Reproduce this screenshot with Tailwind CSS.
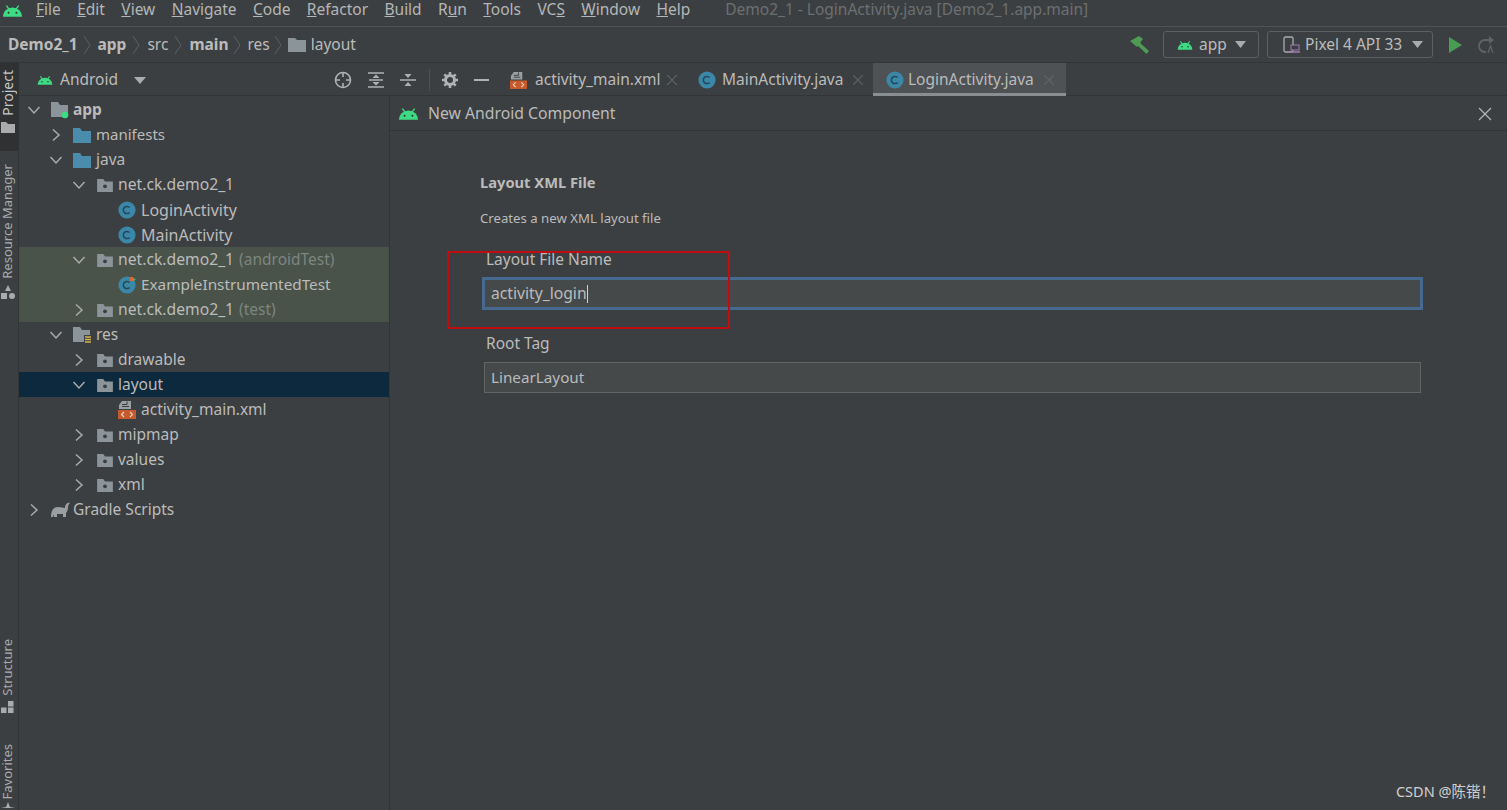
<!DOCTYPE html>
<html lang="en">
<head>
    <meta charset="UTF-8">
    <meta name="viewport" content="width=device-width, initial-scale=1.0">
    <title>Android Studio - New Android Component</title>
    <script src="https://cdn.jsdelivr.net/npm/@tailwindcss/browser@4"></script>
</head>
<body class="bg-[#3c3f41] text-[#bbbbbb] h-[810px] w-[1507px] overflow-hidden relative flex flex-col [font-family:'Noto_Sans','Noto_Sans_CJK_SC',sans-serif] text-[15.5px]">
    <svg class="hidden">
        <symbol id="android" viewBox="0 0 24 14">
            <path d="M1 14a11 10.5 0 0 1 22 0z" fill="#3ddc84"/>
            <path d="M5 1.5l3 4M19 1.5l-3 4" stroke="#3ddc84" stroke-width="1.6" fill="none"/>
            <circle cx="7.5" cy="9.5" r="1.1" fill="#2b2d2e"/><circle cx="16.5" cy="9.5" r="1.1" fill="#2b2d2e"/>
        </symbol>
        <symbol id="chev-r" viewBox="0 0 16 16"><path d="M5 2.5l6 5.5-6 5.5" fill="none" stroke="#a9abad" stroke-width="1.5"/></symbol>
        <symbol id="chev-d" viewBox="0 0 16 16"><path d="M2.5 5l5.5 6 5.5-6" fill="none" stroke="#a9abad" stroke-width="1.5"/></symbol>
        <symbol id="sep" viewBox="0 0 9 20"><path d="M1 1l6 9-6 9" fill="none" stroke="#5d6062"/></symbol>
        <symbol id="close" viewBox="0 0 10 10"><path d="M0 0l10 10M10 0L0 10" stroke="#616365" stroke-width="1.2"/></symbol>
        <symbol id="folder-blue" viewBox="0 0 18 16"><path d="M0 1h7l2 3h9v12H0z" fill="#4a8cac"/></symbol>
        <symbol id="folder-pkg" viewBox="0 0 18 16"><path d="M0 1h7l2 3h9v12H0z" fill="#8a9499"/><circle cx="9" cy="9.5" r="2.2" fill="#3c3f41"/></symbol>
        <symbol id="cls" viewBox="0 0 18 18"><circle cx="9" cy="9" r="8.6" fill="#3b87a8"/><path d="M11.6 6.6a3.6 3.6 0 1 0 0 4.8" fill="none" stroke="#24485a" stroke-width="1.5"/></symbol>
        <symbol id="xml" viewBox="0 0 18 18"><path d="M4 0h9v8H1V4z" fill="#9a9fa2"/><path d="M4 3.5h5v-3" fill="none" stroke="#3c3f41" stroke-width="1"/><path d="M4 5.5h7" stroke="#3c3f41" stroke-width="1"/><rect x="0" y="9" width="18" height="9" fill="#c75a2c"/><path d="M6 11l-2.500 2.500L6 16M12 11l2.500 2.500L12 16" fill="none" stroke="#f0d6c6" stroke-width="1.1"/></symbol>
    </svg>

    <!-- menu bar -->
    <div class="h-[27px] shrink-0 flex items-center border-b border-[#505253] pl-[2px] pb-[6px] text-[15.5px]">
        <svg class="w-[21px] h-[13px] mr-[13px]"><use href="#android"/></svg>
        <div class="flex gap-[16.4px] text-[#b4b6b7]">
            <span><u>F</u>ile</span><span><u>E</u>dit</span><span><u>V</u>iew</span><span><u>N</u>avigate</span><span><u>C</u>ode</span><span><u>R</u>efactor</span><span><u>B</u>uild</span><span>R<u>u</u>n</span><span><u>T</u>ools</span><span>VC<u>S</u></span><span><u>W</u>indow</span><span><u>H</u>elp</span>
        </div>
        <span class="ml-[35px] text-[#6c6f71]">Demo2_1 - LoginActivity.java [Demo2_1.app.main]</span>
    </div>

    <!-- navigation bar -->
    <div class="h-[36px] shrink-0 flex items-center border-b border-[#323436] pl-2">
        <span class="font-bold">Demo2_1</span>
        <svg class="w-[9px] h-[20px] mx-[5.5px]"><use href="#sep"/></svg>
        <span class="font-bold">app</span>
        <svg class="w-[9px] h-[20px] mx-[6px]"><use href="#sep"/></svg>
        <span>src</span>
        <svg class="w-[9px] h-[20px] mx-[6px]"><use href="#sep"/></svg>
        <span class="font-bold">main</span>
        <svg class="w-[9px] h-[20px] mx-[5px]"><use href="#sep"/></svg>
        <span>res</span>
        <svg class="w-[9px] h-[20px] mx-[4.5px]"><use href="#sep"/></svg>
        <svg class="w-[18px] h-[14px] mr-[5px]" viewBox="0 0 18 14"><path d="M0 0h7l2 2h9v12H0z" fill="#8a9499"/></svg>
        <span>layout</span>

        <div class="ml-auto flex items-center">
            <svg class="w-[20px] h-[20px] mr-[13px]" viewBox="0 0 20 20"><path d="M0 6l9-5 4 3-6 8z" fill="#4f9a55"/><path d="M8 6l11 10-2.500 3L6 9z" fill="#4f9a55"/></svg>
            <div class="w-[96px] h-[27px] border border-[#5e6060] rounded-[3px] flex items-center pl-[13px] mr-2">
                <svg class="w-[16px] h-[10px] mr-[6px]"><use href="#android"/></svg><span>app</span>
                <svg class="w-[11px] h-[7px] ml-[8px]" viewBox="0 0 11 7"><path d="M0 0h11L5.500 7z" fill="#a9abad"/></svg>
            </div>
            <div class="w-[166px] h-[27px] border border-[#5e6060] rounded-[3px] flex items-center pl-[15px]">
                <svg class="w-[17px] h-[18px] mr-[5px]" viewBox="0 0 17 18"><rect x="1" y="1" width="9" height="15" rx="1.500" fill="none" stroke="#a9abad" stroke-width="1.300"/><rect x="8" y="9" width="8" height="5" fill="#3c3f41" stroke="#9c7fb0"/><path d="M7 16h10" stroke="#9c7fb0" stroke-width="1.500"/></svg>
                <span>Pixel 4 API 33</span>
                <svg class="w-[11px] h-[7px] ml-[10px]" viewBox="0 0 11 7"><path d="M0 0h11L5.500 7z" fill="#a9abad"/></svg>
            </div>
            <svg class="w-[13px] h-[16px] ml-[16px]" viewBox="0 0 13 16"><path d="M0 0l13 8-13 8z" fill="#499c54"/></svg>
            <svg class="w-[18px] h-[18px] ml-[15px] mr-[12px]" viewBox="0 0 18 18"><path d="M13 4H8a5.500 5.500 0 0 0 0 12h1" fill="none" stroke="#5f6365" stroke-width="1.800"/><path d="M12 0l5 4-5 4z" fill="#5f6365"/><path d="M11 17l2.500-7 2.500 7" fill="none" stroke="#5f6365" stroke-width="1.300"/></svg>
        </div>
    </div>

    <div class="flex flex-1 min-h-0">
        <!-- left tool stripe -->
        <div class="w-[19px] shrink-0 flex flex-col items-center text-[13px] leading-[15px] text-[#a9abad] border-r border-[#323436] pr-[3px]">
            <div class="w-[19px] -mr-[3px] h-[88px] shrink-0 bg-[#2f3133] flex flex-col items-center pt-[7px] pr-[3px] text-[#c4c6c7]">
                <span class="[writing-mode:vertical-rl] rotate-180 whitespace-nowrap text-[14px] leading-[15px]">Project</span>
                <svg class="w-[14px] h-[11px] mt-[6px] shrink-0" viewBox="0 0 14 11"><path d="M0 0h5l2 2h7v9H0z" fill="#a9abad"/></svg>
            </div>
            <span class="[writing-mode:vertical-rl] rotate-180 whitespace-nowrap shrink-0 mt-[13px]">Resource Manager</span>
            <svg class="w-[14px] h-[15px] mt-[6px] shrink-0" viewBox="0 0 14 15"><path d="M7 0l3 6H4z" fill="#a9abad"/><rect x="0" y="8" width="6" height="6" fill="#a9abad"/><circle cx="11" cy="11" r="3" fill="#a9abad"/></svg>
            <span class="[writing-mode:vertical-rl] rotate-180 whitespace-nowrap shrink-0 mt-[339px]">Structure</span>
            <svg class="w-[13px] h-[12px] mt-[6px] shrink-0" viewBox="0 0 13 12"><rect x="7" y="0" width="5.500" height="5.500" fill="#a9abad"/><rect x="0" y="6.500" width="5.500" height="5.500" fill="#a9abad"/><rect x="7" y="6.500" width="5.500" height="5.500" fill="#a9abad"/></svg>
            <span class="[writing-mode:vertical-rl] rotate-180 whitespace-nowrap shrink-0 mt-[31px]">Favorites</span>
            <svg class="w-[14px] h-[6px] mt-[2px] shrink-0" viewBox="0 0 14 6"><path d="M7 0l2 5 5 1H0l5-1z" fill="#a9abad"/></svg>
        </div>

        <div class="flex-1 min-w-0 flex flex-col">
            <!-- panel toolbar and editor tabs share one row -->
            <div class="h-[33px] shrink-0 flex border-b border-[#323436]">
                <div class="w-[481px] shrink-0 flex items-center pl-[18px] pr-[11px] pt-[2px]">
                    <svg class="w-[16px] h-[10px] mr-[7px]"><use href="#android"/></svg>
                    <span>Android</span>
                    <svg class="w-[12px] h-[7px] ml-[16px]" viewBox="0 0 12 7"><path d="M0 0h12L6 7z" fill="#a9abad"/></svg>
                    <div class="ml-auto flex items-center">
                        <svg class="w-[18px] h-[18px]" viewBox="0 0 18 18"><circle cx="9" cy="9" r="7.500" fill="none" stroke="#afb1b3" stroke-width="1.600"/><path d="M9 1v5M9 12v5M1 9h5M12 9h5" stroke="#afb1b3" stroke-width="1.600"/></svg>
                        <svg class="w-[16px] h-[16px] ml-[16px]" viewBox="0 0 16 16"><path d="M0 1h16M0 15h16M1 8h14" stroke="#afb1b3" stroke-width="1.500"/><path d="M8 2.500l3.500 3.500h-7zM8 13.500l3.500-3.500h-7z" fill="#afb1b3"/></svg>
                        <svg class="w-[16px] h-[16px] ml-[16px]" viewBox="0 0 16 16"><path d="M0 8h16" stroke="#afb1b3" stroke-width="1.500"/><path d="M8 6L4.500 2h7zM8 10l3.500 4h-7z" fill="#afb1b3"/></svg>
                        <div class="w-px h-[22px] bg-[#505253] ml-[13px]"></div>
                        <svg class="w-[16px] h-[16px] ml-[12px]" viewBox="0 0 16 16"><circle cx="8" cy="8" r="4.500" fill="none" stroke="#afb1b3" stroke-width="3"/><path d="M8 0v3M8 13v3M0 8h3M13 8h3M2.300 2.300l2.100 2.100M11.600 11.600l2.100 2.100M2.300 13.700l2.100-2.100M11.600 4.400l2.100-2.100" stroke="#afb1b3" stroke-width="2.600"/></svg>
                        <div class="w-[15px] h-[2px] bg-[#afb1b3] ml-[16px]"></div>
                    </div>
                </div>
                <div class="flex items-center w-[187px] pl-[10px] pt-[2px]">
                    <svg class="w-[17px] h-[17px] mr-[8px]"><use href="#xml"/></svg><span>activity_main.xml</span>
                    <svg class="w-[10px] h-[10px] ml-[6px]"><use href="#close"/></svg>
                </div>
                <div class="flex items-center w-[186px] pl-[11px] pt-[2px]">
                    <svg class="w-[18px] h-[18px] mr-[6px]"><use href="#cls"/></svg><span>MainActivity.java</span>
                    <svg class="w-[10px] h-[10px] ml-[10px]"><use href="#close"/></svg>
                </div>
                <div class="flex items-center w-[193px] pl-[13px] pt-[4px] bg-[#4e5254] border-b-[3px] border-[#8b8e90] mb-[-1px]">
                    <svg class="w-[18px] h-[18px] mr-[4px]"><use href="#cls"/></svg><span>LoginActivity.java</span>
                    <svg class="w-[10px] h-[10px] ml-[10px]"><use href="#close"/></svg>
                </div>
            </div>

            <div class="flex flex-1 min-h-0">
                <!-- project tree -->
                <div class="w-[371px] shrink-0 pt-[1px] border-r border-[#323436]">
                    <div class="h-[25px] flex items-center pl-[7px]"><svg class="w-[16px] h-[16px]"><use href="#chev-d"/></svg>
                        <svg class="w-[18px] h-[18px] ml-[9px] mr-[4px]" viewBox="0 0 18 18"><path d="M0 1h7l2 3h8v12H0z" fill="#8a9499"/><circle cx="14" cy="14" r="3.300" fill="#3ddc84"/></svg><span class="font-bold">app</span></div>
                    <div class="h-[25px] flex items-center pl-[29px]"><svg class="w-[16px] h-[16px]"><use href="#chev-r"/></svg>
                        <svg class="w-[18px] h-[16px] ml-[9px] mr-[5px]"><use href="#folder-blue"/></svg><span class="text-[15px]">manifests</span></div>
                    <div class="h-[25px] flex items-center pl-[29px]"><svg class="w-[16px] h-[16px]"><use href="#chev-d"/></svg>
                        <svg class="w-[18px] h-[16px] ml-[9px] mr-[5px]"><use href="#folder-blue"/></svg><span>java</span></div>
                    <div class="h-[25px] flex items-center pl-[52px]"><svg class="w-[16px] h-[16px]"><use href="#chev-d"/></svg>
                        <svg class="w-[18px] h-[14px] ml-[9px] mr-[4px]"><use href="#folder-pkg"/></svg><span class="text-[15.7px]">net.ck.demo2_1</span></div>
                    <div class="h-[25px] flex items-center pl-[99px]"><svg class="w-[18px] h-[18px] mr-[5px]"><use href="#cls"/></svg><span class="text-[16px]">LoginActivity</span></div>
                    <div class="h-[25px] flex items-center pl-[99px]"><svg class="w-[18px] h-[18px] mr-[5px]"><use href="#cls"/></svg><span class="text-[16px]">MainActivity</span></div>
                    <div class="bg-[#49534a]">
                        <div class="h-[25px] flex items-center pl-[52px]"><svg class="w-[16px] h-[16px]"><use href="#chev-d"/></svg>
                            <svg class="w-[18px] h-[14px] ml-[9px] mr-[4px]"><use href="#folder-pkg"/></svg><span class="text-[15.7px]">net.ck.demo2_1</span><span class="ml-[5px] text-[#7d8580]">(androidTest)</span></div>
                        <div class="h-[25px] flex items-center pl-[99px]"><svg class="w-[18px] h-[18px] mr-[5px]" viewBox="0 0 18 18"><use href="#cls"/><path d="M12 1h3v4h-3z" fill="#d9693a"/><path d="M15 1.500l3 2-3 2z" fill="#5aa85f"/></svg><span class="text-[15.3px]">ExampleInstrumentedTest</span></div>
                        <div class="h-[25px] flex items-center pl-[52px]"><svg class="w-[16px] h-[16px]"><use href="#chev-r"/></svg>
                            <svg class="w-[18px] h-[14px] ml-[9px] mr-[4px]"><use href="#folder-pkg"/></svg><span class="text-[15.7px]">net.ck.demo2_1</span><span class="ml-[5px] text-[#7d8580]">(test)</span></div>
                    </div>
                    <div class="h-[25px] flex items-center pl-[29px]"><svg class="w-[16px] h-[16px]"><use href="#chev-d"/></svg>
                        <svg class="w-[18px] h-[18px] ml-[9px] mr-[5px]" viewBox="0 0 18 18"><path d="M0 1h7l2 3h8v12H0z" fill="#8a9499"/><rect x="11" y="9" width="7" height="9" fill="#3c3f41"/><path d="M12 11h6M12 13.500h6M12 16h6" stroke="#d3b14c" stroke-width="1.300"/></svg><span>res</span></div>
                    <div class="h-[25px] flex items-center pl-[52px]"><svg class="w-[16px] h-[16px]"><use href="#chev-r"/></svg>
                        <svg class="w-[18px] h-[14px] ml-[9px] mr-[4px]"><use href="#folder-pkg"/></svg><span>drawable</span></div>
                    <div class="h-[25px] flex items-center pl-[52px] bg-[#0d293e]"><svg class="w-[16px] h-[16px]"><use href="#chev-d"/></svg>
                        <svg class="w-[18px] h-[14px] ml-[9px] mr-[4px]"><use href="#folder-pkg"/></svg><span>layout</span></div>
                    <div class="h-[25px] flex items-center pl-[99px]"><svg class="w-[18px] h-[18px] mr-[5px]"><use href="#xml"/></svg><span>activity_main.xml</span></div>
                    <div class="h-[25px] flex items-center pl-[52px]"><svg class="w-[16px] h-[16px]"><use href="#chev-r"/></svg>
                        <svg class="w-[18px] h-[14px] ml-[9px] mr-[4px]"><use href="#folder-pkg"/></svg><span>mipmap</span></div>
                    <div class="h-[25px] flex items-center pl-[52px]"><svg class="w-[16px] h-[16px]"><use href="#chev-r"/></svg>
                        <svg class="w-[18px] h-[14px] ml-[9px] mr-[4px]"><use href="#folder-pkg"/></svg><span>values</span></div>
                    <div class="h-[25px] flex items-center pl-[52px]"><svg class="w-[16px] h-[16px]"><use href="#chev-r"/></svg>
                        <svg class="w-[18px] h-[14px] ml-[9px] mr-[4px]"><use href="#folder-pkg"/></svg><span>xml</span></div>
                    <div class="h-[25px] flex items-center pl-[7px]"><svg class="w-[16px] h-[16px]"><use href="#chev-r"/></svg>
                        <svg class="w-[19px] h-[15px] ml-[9px] mr-[3px]" viewBox="0 0 19 15"><path d="M0 15c0-6 2-10 7-10 3 0 5 1 7 1 0-3 2-6 5-5-1 1-2 2-2 4 0 3-1 5-2 6v4h-3v-3H6v3H3v-3l-1 3z" fill="#9a9fa2"/></svg><span>Gradle Scripts</span></div>
                </div>

                <!-- dialog -->
                <div class="flex-1 min-w-0">
                    <div class="h-[35px] flex items-center border-b border-[#323436] pl-[8px] pr-[15px] pt-[1px]">
                        <svg class="w-[21px] h-[13px] mr-[9px]"><use href="#android"/></svg>
                        <span class="text-[15.75px]">New Android Component</span>
                        <svg class="w-[14px] h-[14px] ml-auto" viewBox="0 0 14 14"><path d="M1 1l12 12M13 1L1 13" stroke="#b4b6b7" stroke-width="1.200"/></svg>
                    </div>
                    <div class="pl-[90px] pt-[40px]">
                        <h1 class="font-bold text-[14.7px] leading-[22px]">Layout XML File</h1>
                        <p class="text-[13.2px] leading-[18px] mt-[16px]">Creates a new XML layout file</p>
                        <label class="block ml-[6px] mt-[22px] leading-[20px]">Layout File Name</label>
                        <div class="mt-[8px] w-[941px] h-[33px] ml-[2px] border-[3px] border-[#46698f] bg-[#45494a] flex items-center pl-[6px]">
                            <span class="text-[15.7px]">activity_login</span><span class="w-px h-[18px] bg-[#d0d0d0]"></span>
                        </div>
                        <label class="block ml-[6px] mt-[23px] leading-[20px]">Root Tag</label>
                        <div class="mt-[9px] w-[937px] h-[31px] ml-[4px] border border-[#646464] bg-[#45494a] flex items-center pl-[6px] text-[15.25px]">LinearLayout</div>
                    </div>
                </div>
            </div>
        </div>
    </div>

    <!-- red annotation and watermark sit over the screenshot -->
    <div class="absolute left-[447px] top-[251px] w-[283px] h-[78px] border-2 border-[#c00d12]"></div>
    <div class="absolute right-[12px] top-[781px] text-[14.5px] text-[#cfd0d1]">CSDN @陈锴！</div>
</body>
</html>
